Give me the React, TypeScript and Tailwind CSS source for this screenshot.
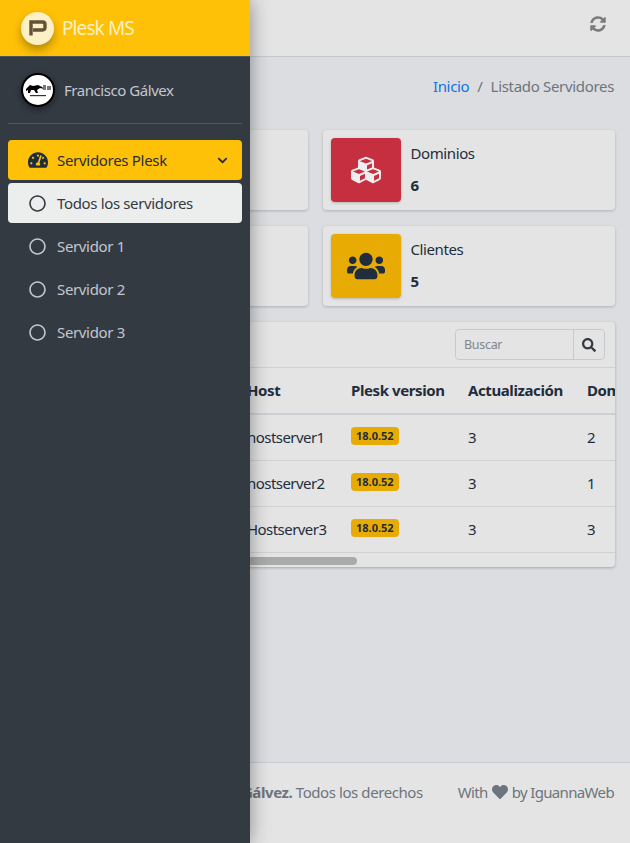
import { FaChevronDown, FaCubes, FaHeart, FaRegCircle, FaSearch, FaSyncAlt, FaTachometerAlt, FaUsers } from "react-icons/fa";

const font = { fontFamily: '"Noto Sans", sans-serif' };

function Brand() {
  return (
    <div className="flex h-[57px] items-center gap-[8px] bg-[#ffc107] pl-[21px] border-b border-[#4b545c]">
      <div className="flex size-[33px] items-center justify-center rounded-full bg-[#fdf0c6] shadow-[0_5px_10px_rgba(0,0,0,0.3)]">
        <svg width="18" height="17" viewBox="0 0 18 17">
          <path
            d="M2 15.5V2h11.5Q16 2 16 4.5v3Q16 10 13.5 10H4"
            fill="none"
            stroke="#5f5338"
            strokeWidth="3.4"
          />
        </svg>
      </div>
      <span className="text-[19px] leading-none text-[#fdf0c6] tracking-[-0.9px]">Plesk MS</span>
    </div>
  );
}

function Avatar() {
  return (
    <div className="size-[34px] rounded-full border-2 border-black bg-white shadow-[0_3px_6px_rgba(0,0,0,0.4)]">
      <svg width="30" height="30" viewBox="0 0 30 30">
        <path d="M3 14l4-4 3 1 5-1 4 2 2 2-4-1-3 2 1 3-2 0-2-3-3 0-1 3-2 0 0-3-2 1z" fill="#000" />
        <path d="M20 10h3v5h-3zM24 11h4v4h-4z" fill="#777" />
        <path d="M7 20h16v1.2H7z" fill="#333" />
      </svg>
    </div>
  );
}

function SubItem({ label, active }: { label: string; active?: boolean }) {
  return (
    <div
      className={
        active
          ? "flex h-[40px] items-center gap-[11px] rounded-[4px] bg-[#eceeee] pl-[21px] text-[#343a40]"
          : "flex h-[40px] items-center gap-[11px] rounded-[4px] pl-[21px] text-[#c2c7d0]"
      }
    >
      <FaRegCircle className="size-[17px]" />
      <span className="text-[15px] tracking-[-0.35px]">{label}</span>
    </div>
  );
}

function Sidebar() {
  return (
    <aside className="absolute inset-y-0 left-0 w-[250px] bg-[#343a42] shadow-[0_0_18px_rgba(0,0,0,0.4)]">
      <Brand />
      <div className="mx-[8px] flex h-[67px] items-center gap-[9px] border-b border-[#4f5962] pl-[13px]">
        <Avatar />
        <span className="text-[15px] tracking-[-0.45px] text-[#c2c7d0]">Francisco Gálvex</span>
      </div>
      <nav className="mt-[16px] flex flex-col gap-[3px] px-[8px]">
        <div className="flex h-[40px] items-center rounded-[4px] bg-[#ffc107] pl-[20px] pr-[14px] text-[#1f2d3d]">
          <FaTachometerAlt className="size-[20px]" />
          <span className="ml-[9px] text-[15px] tracking-[-0.3px]">Servidores Plesk</span>
          <FaChevronDown className="ml-auto size-[11px]" />
        </div>
        <SubItem label="Todos los servidores" active />
        <SubItem label="Servidor 1" />
        <SubItem label="Servidor 2" />
        <SubItem label="Servidor 3" />
      </nav>
    </aside>
  );
}

function InfoBox({ bg, label, value, icon }: { bg?: string; label?: string; value?: string; icon?: React.ReactNode }) {
  return (
    <div className="flex h-[80px] gap-[10px] rounded-[4px] bg-[#e4e4e4] p-[8px] shadow-[0_1px_3px_rgba(0,0,0,0.2)]">
      <div className={`flex h-[64px] w-[70px] items-center justify-center rounded-[4px] shadow-[0_1px_3px_rgba(0,0,0,0.2)] ${bg ?? ""}`}>
        {icon}
      </div>
      <div className="flex flex-col text-[#1f2d3d]">
        <span className="mt-[3px] text-[15px] leading-[24px] tracking-[-0.4px]">{label}</span>
        <span className="mt-[10px] text-[15px] leading-[20px] font-bold">{value}</span>
      </div>
    </div>
  );
}

const rows = [
  { host: "hostserver1", dom: "2" },
  { host: "hostserver2", dom: "1" },
  { host: "Hostserver3", dom: "3" },
];

function ServersTable() {
  return (
    <div className="relative mt-[16px] overflow-hidden rounded-[4px] bg-[#e4e4e4] shadow-[0_1px_3px_rgba(0,0,0,0.25)]">
      <div className="flex h-[46px] items-center justify-end border-b border-[#ced1d5] pr-[10px]">
        <div className="flex h-[31px] w-[150px] rounded-[4px] border border-[#c6cad0]">
          <span className="flex-1 border-r border-[#c6cad0] pl-[8px] text-[12.5px] leading-[29px] tracking-[-0.3px] text-[#7f868d]">Buscar</span>
          <span className="flex w-[30px] items-center justify-center text-[#343a40]">
            <FaSearch className="size-[14px]" />
          </span>
        </div>
      </div>
      <table className="w-[680px] table-fixed text-left text-[15px] tracking-[-0.4px] text-[#1f2d3d]">
        <colgroup>
          <col className="w-[220px]" />
          <col className="w-[104px]" />
          <col className="w-[117px]" />
          <col className="w-[119px]" />
          <col className="w-[120px]" />
        </colgroup>
        <thead>
          <tr className="h-[46px] border-b-2 border-[#ccd0d5]">
            <th />
            <th className="px-[12px] font-bold">Host</th>
            <th className="px-[12px] font-bold whitespace-nowrap">Plesk version</th>
            <th className="px-[12px] font-bold">Actualización</th>
            <th className="px-[12px] font-bold">Dominios</th>
          </tr>
        </thead>
        <tbody>
          {rows.map((row) => (
            <tr key={row.host} className="h-[46px] border-b border-[#cfd2d5]">
              <td />
              <td className="px-[12px] tracking-[-0.55px]">{row.host}</td>
              <td className="px-[12px]">
                <span className="relative -top-[3px] inline-block h-[18px] rounded-[4px] bg-[#e7ab04] px-[5px] text-[11px] leading-[18px] font-bold tracking-normal">
                  18.0.52
                </span>
              </td>
              <td className="px-[12px]">3</td>
              <td className="px-[12px]">{row.dom}</td>
            </tr>
          ))}
        </tbody>
      </table>
      <div className="h-[14px]" />
      <div className="absolute bottom-[2px] left-0 h-[8px] w-[342px] rounded-full bg-[#aaaaaa]" />
    </div>
  );
}

export default function App() {
  return (
    <div className="relative flex h-[843px] w-[630px] flex-col overflow-hidden bg-[#dcdde1]" style={font}>
      <header className="flex h-[57px] shrink-0 items-center justify-end border-b border-[#c5c9ce] bg-[#e4e4e4] pr-[24px]">
        <FaSyncAlt className="mb-[8px] size-[16px] text-[#7a7a7a]" />
      </header>
      <main className="flex-1 px-[15px]">
        <div className="flex h-[73px] items-start justify-end pr-[1px] pt-[19px] text-[15px] leading-[20px] tracking-[-0.32px]">
          <span className="text-[#0f74e0]">Inicio</span>
          <span className="mx-[8px] text-[#6c757d]">/</span>
          <span className="text-[#6c757d]">Listado Servidores</span>
        </div>
        <div className="grid grid-cols-2 gap-x-[15px] gap-y-[16px]">
          <InfoBox />
          <InfoBox
            bg="bg-[#c62f40]"
            label="Dominios"
            value="6"
            icon={<FaCubes className="size-[30px] text-[#eeeeee]" />}
          />
          <InfoBox />
          <InfoBox
            bg="bg-[#e7ab04]"
            label="Clientes"
            value="5"
            icon={<FaUsers className="size-[38px] text-[#1f2d3d]" />}
          />
        </div>
        <ServersTable />
      </main>
      <footer className="flex h-[81px] shrink-0 items-start justify-end gap-[35px] border-t border-[#c9cdd2] bg-[#e4e4e4] pr-[16px] pt-[19px] text-[15px] leading-[20px] tracking-[-0.65px] whitespace-nowrap text-[#6c757d]">
        <span className="tracking-[-0.42px]">
          <b>Francisco Gálvez.</b> Todos los derechos
        </span>
        <span className="flex items-center gap-[4px]">
          With <FaHeart className="size-[16px]" /> by IguannaWeb
        </span>
      </footer>
      <Sidebar />
    </div>
  );
}
